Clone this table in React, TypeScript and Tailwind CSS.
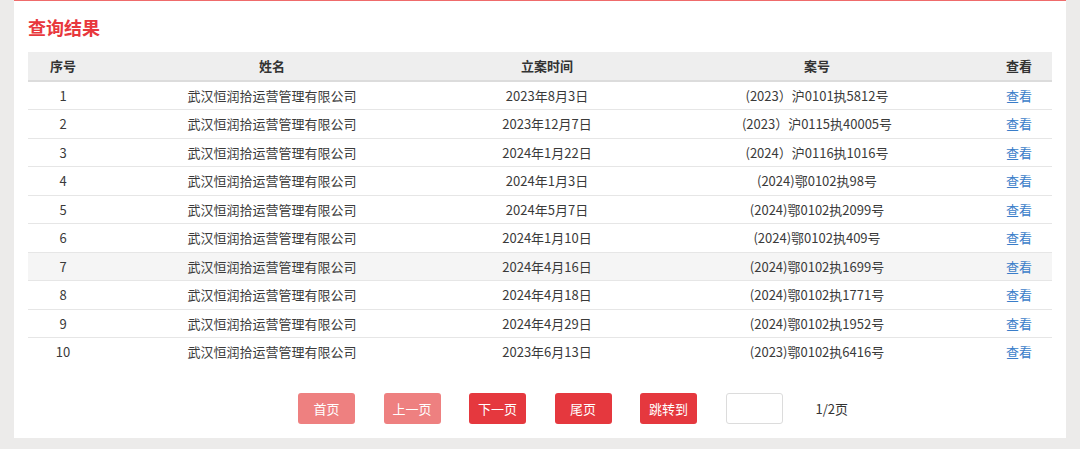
import React from 'react';

const rows = [
  { id: 1, name: '武汉恒润拾运营管理有限公司', date: '2023年8月3日', caseNo: '(2023）沪0101执5812号' },
  { id: 2, name: '武汉恒润拾运营管理有限公司', date: '2023年12月7日', caseNo: '(2023）沪0115执40005号' },
  { id: 3, name: '武汉恒润拾运营管理有限公司', date: '2024年1月22日', caseNo: '(2024）沪0116执1016号' },
  { id: 4, name: '武汉恒润拾运营管理有限公司', date: '2024年1月3日', caseNo: '(2024)鄂0102执98号' },
  { id: 5, name: '武汉恒润拾运营管理有限公司', date: '2024年5月7日', caseNo: '(2024)鄂0102执2099号' },
  { id: 6, name: '武汉恒润拾运营管理有限公司', date: '2024年1月10日', caseNo: '(2024)鄂0102执409号' },
  { id: 7, name: '武汉恒润拾运营管理有限公司', date: '2024年4月16日', caseNo: '(2024)鄂0102执1699号' },
  { id: 8, name: '武汉恒润拾运营管理有限公司', date: '2024年4月18日', caseNo: '(2024)鄂0102执1771号' },
  { id: 9, name: '武汉恒润拾运营管理有限公司', date: '2024年4月29日', caseNo: '(2024)鄂0102执1952号' },
  { id: 10, name: '武汉恒润拾运营管理有限公司', date: '2023年6月13日', caseNo: '(2023)鄂0102执6416号' },
];

export default function App() {
  return (
    <div
      className="h-[449px] w-[1080px] bg-[#ecebea] px-[14px]"
      style={{ fontFamily: '"Noto Sans CJK SC", "Noto Sans", sans-serif' }}
    >
      <div className="h-[438px] border-t border-[#ef6b6b] bg-white px-[14px]">
        {/* Title */}
        <h2 className="pt-[15px] text-[18px] font-bold leading-[22px] text-[#e8383d]">查询结果</h2>

        {/* Result Table */}
        <table className="mt-[14px] w-full table-fixed border-collapse text-[13px] text-[#3a3a3a]">
          <colgroup>
            <col className="w-[70px]" />
            <col className="w-[348px]" />
            <col className="w-[202px]" />
            <col className="w-[338px]" />
            <col />
          </colgroup>
          <thead>
            <tr className="h-[29px] border-b-2 border-[#dcdcdc] bg-[#eeeeee] font-bold text-[#333]">
              <th>序号</th>
              <th>姓名</th>
              <th>立案时间</th>
              <th>案号</th>
              <th>查看</th>
            </tr>
          </thead>
          <tbody>
            {rows.map((row) => (
              <tr
                key={row.id}
                className={`h-[28.5px] text-center ${row.id < 10 ? 'border-b border-[#e6e6e6]' : ''} ${row.id === 7 ? 'bg-[#f5f5f5]' : ''}`}
              >
                <td>{row.id}</td>
                <td>{row.name}</td>
                <td>{row.date}</td>
                <td>{row.caseNo}</td>
                <td className="text-[#3a7dc9]">查看</td>
              </tr>
            ))}
          </tbody>
        </table>

        {/* Pagination */}
        <div className="mt-[27px] flex items-center pl-[270px] text-[13px]">
          <button className="h-[31px] w-[57px] rounded-[3px] bg-[#ee8080] text-white">首页</button>
          <button className="ml-[28.5px] h-[31px] w-[57px] rounded-[3px] bg-[#ee8080] text-white">上一页</button>
          <button className="ml-[28.5px] h-[31px] w-[57px] rounded-[3px] bg-[#e5383e] text-white">下一页</button>
          <button className="ml-[28.5px] h-[31px] w-[57px] rounded-[3px] bg-[#e5383e] text-white">尾页</button>
          <button className="ml-[28.5px] h-[31px] w-[57px] rounded-[3px] bg-[#e5383e] text-white">跳转到</button>
          <input className="ml-[28.5px] h-[31px] w-[57px] rounded-[3px] border border-[#dcdcdc] outline-none" />
          <span className="ml-[33px] text-[#333]">1/2页</span>
        </div>
      </div>
    </div>
  );
}
